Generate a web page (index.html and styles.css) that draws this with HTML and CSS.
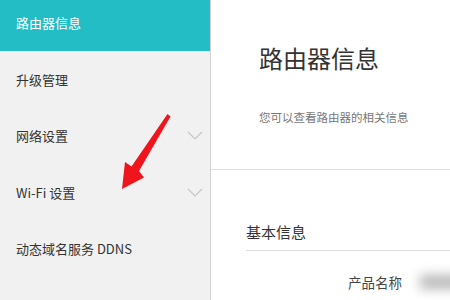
FILE: index.html
```html
<!DOCTYPE html>
<html lang="zh-CN">
<head>
    <meta charset="UTF-8">
    <title>路由器信息</title>
    <link rel="stylesheet" href="styles.css">
</head>
<body>
    <div class="page">
        <div class="sidebar">
            <div class="nav">
                <div class="nav-item active">路由器信息</div>
                <div class="nav-item">升级管理</div>
                <div class="nav-item">网络设置
                    <svg class="chevron" width="16" height="9" viewBox="0 0 16 9"><polyline points="1,1 8,8 15,1" /></svg>
                </div>
                <div class="nav-item">Wi-Fi 设置
                    <svg class="chevron" width="16" height="9" viewBox="0 0 16 9"><polyline points="1,1 8,8 15,1" /></svg>
                </div>
                <div class="nav-item">动态域名服务 DDNS</div>
                <div class="nav-item">系统管理
                    <svg class="chevron" width="16" height="9" viewBox="0 0 16 9"><polyline points="1,1 8,8 15,1" /></svg>
                </div>
            </div>
        </div>

        <div class="main">
            <div class="header">
                <h1>路由器信息</h1>
                <p class="subtitle">您可以查看路由器的相关信息</p>
            </div>
            <div class="section">
                <h2>基本信息</h2>
                <div class="row">
                    <span class="label">产品名称</span>
                    <span class="value"></span>
                </div>
            </div>
        </div>
    </div>

    <!-- red annotation arrow -->
    <svg class="arrow" width="450" height="300" viewBox="0 0 450 300">
        <polygon points="167.5,114 170.5,116.5 139,171 144,177.5 122,189 125,162 131.5,166.5" fill="#f0141c" />
    </svg>
</body>
</html>
```

FILE: styles.css
```css
body {
    margin: 0;
    font-family: "Noto Sans CJK SC", "Noto Sans", sans-serif;
    color: #333;
    background: #fff;
    overflow: hidden;
}
.page {
    display: flex;
    width: 450px;
    height: 300px;
    overflow: hidden;
}
.sidebar {
    width: 210px;
    flex-shrink: 0;
    background-color: #f1f1f1;
    border-right: 1px solid #d2d2d2;
    overflow: hidden;
}
.nav {
    margin-top: -5.5px;
}
.nav-item {
    height: 56.5px;
    display: flex;
    align-items: center;
    justify-content: space-between;
    padding: 0 7px 0 16px;
    font-size: 13px;
    color: #333;
}
.nav-item.active {
    background-color: #22bdc5;
    color: #fff;
}
.chevron polyline {
    fill: none;
    stroke: #c6c6c6;
    stroke-width: 1.2;
}
.main {
    flex: 1;
}
.header {
    padding: 44px 0 44px 48px;
    border-bottom: 1px solid #dedede;
}
.header h1 {
    margin: 0;
    font-size: 24px;
    line-height: 28px;
    font-weight: normal;
    color: #333;
}
.subtitle {
    margin: 37px 0 0;
    font-size: 11.5px;
    line-height: 16px;
    color: #777;
}
.section {
    padding: 52px 0 0 35px;
}
.section h2 {
    margin: 0;
    padding-bottom: 8px;
    font-size: 15px;
    line-height: 20px;
    font-weight: normal;
    color: #333;
    border-bottom: 1px solid #dedede;
}
.row {
    display: flex;
    align-items: center;
    margin-top: 22px;
    font-size: 13.5px;
    line-height: 18px;
}
.label {
    width: 156px;
    text-align: right;
    color: #444;
}
.value {
    width: 70px;
    height: 14px;
    margin-left: 18px;
    background-color: #b8b8b8;
    filter: blur(6px);
}
.arrow {
    position: absolute;
    top: 0;
    left: 0;
    pointer-events: none;
}
```
